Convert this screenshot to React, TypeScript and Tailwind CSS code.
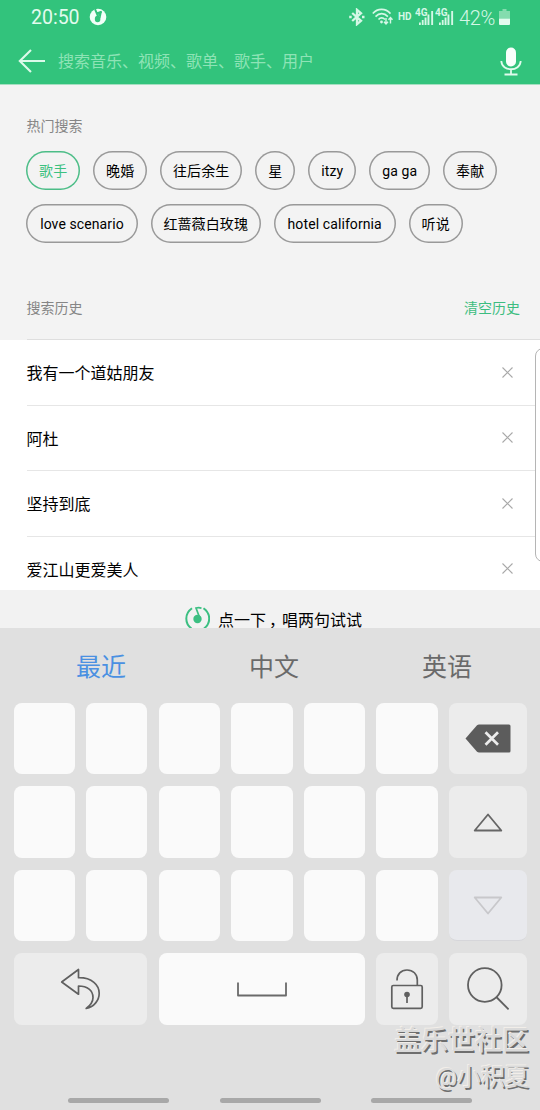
import type { ReactNode } from 'react';

const hotRows = [
  [
    { label: '歌手', width: 'w-[54px]', active: true },
    { label: '晚婚', width: 'w-[54px]' },
    { label: '往后余生', width: 'w-[82px]' },
    { label: '星', width: 'w-10' },
    { label: 'itzy', width: 'w-12' },
    { label: 'ga ga', width: 'w-[61px]' },
    { label: '奉献', width: 'w-[54px]' },
  ],
  [
    { label: 'love scenario', width: 'w-[111.500px]' },
    { label: '红蔷薇白玫瑰', width: 'w-[110px]' },
    { label: 'hotel california', width: 'w-[122px]' },
    { label: '听说', width: 'w-[54px]' },
  ],
];

const history = ['我有一个道姑朋友', '阿杜', '坚持到底', '爱江山更爱美人'];

function StatusBar() {
  return (
    <div className="flex h-8 items-center pl-[31px] pr-[30px] pt-0.5">
      <span className="mt-0.5 text-[19.5px] leading-none text-[#e2fbee]">20:50</span>
      <svg className="ml-[9px]" width="18" height="18" viewBox="0 0 18 18">
        <circle cx="9" cy="9" r="8.3" fill="#f1fff8" />
        <path d="M6 1.200 9.600 9.500M8.400 5.200l4.200-1.600" stroke="#32c37c" strokeWidth="2" fill="none" />
        <ellipse cx="8.600" cy="11" rx="2.800" ry="3.300" fill="#32c37c" />
        <path d="M8.200 4.800 13 3.200 11.400 10.500Z" fill="#32c37c" />
      </svg>
      <div className="ml-auto flex items-center text-[#d5f7e6]">
        <svg width="16" height="18" viewBox="0 0 16 18" fill="none" stroke="currentColor" strokeWidth="2.300">
          <path d="M3.200 5l8.800 7.800-4 3.400V1.800L12 5.200l-8.800 7.800" />
          <path d="M.2 9h2.500M13 9h2.500" />
        </svg>
        <svg className="ml-[7px]" width="23" height="18" viewBox="0 0 23 18" fill="none" stroke="currentColor" strokeWidth="1.6">
          <path d="M.8 5.600C5.500 0 13.500 0 18.500 5.600M3.500 8.600c3.600-4 8.800-4 12.400 0M6.500 11.400c1.800-2.100 4.600-2.100 6.400 0" />
          <circle cx="9.500" cy="14" r="1.4" fill="currentColor" stroke="none" />
          <path d="M14 10v6M12 13.800l2 2.200 2-2.200M18.500 15.500v-6M16.500 11.700l2-2.200 2 2.200" strokeWidth="1.4" />
        </svg>
        <span className="ml-[3px] w-4 pb-px text-[10px] font-bold leading-none">HD</span>
        <Signal />
        <Signal />
        <span className="ml-[5px] mt-0.5 w-[36px] text-[20px] font-light leading-none tracking-[-0.3px]">42%</span>
        <svg className="ml-[4px]" width="11" height="17" viewBox="0 0 11 17">
          <path d="M3.500 0h4v2H11v7.500H0V2h3.500z" fill="#84dcae" />
          <path d="M0 9.500h11V15a1 1 0 0 1-1 1H1a1 1 0 0 1-1-1z" fill="#e2fbee" />
        </svg>
      </div>
    </div>
  );
}

function Signal() {
  return (
    <svg className="ml-[1px]" width="19" height="18" viewBox="0 0 19 18" fill="currentColor">
      <text x="0" y="8" fontSize="10" fontWeight="700">4G</text>
      <path d="M4 14.500h1.800V17H4zM6.800 12h1.800v5H6.800zM9.600 9.500h1.900V17H9.600zM12.500 6.500h1.900V17h-1.900zM16.200 3h1.900v14h-1.900z" />
    </svg>
  );
}

function SearchBar() {
  return (
    <div className="flex h-[52px] items-center pl-[18px] pr-[18px] pt-[5px]">
      <svg width="27" height="24" viewBox="0 0 27 24" fill="none" stroke="#dcfaea" strokeWidth="2.100">
        <path d="M13 1 1.800 12 13 23M1.800 12H27" />
      </svg>
      <span className="ml-[13px] mt-0.5 text-base leading-none text-[#8ee3b6]">搜索音乐、视频、歌单、歌手、用户</span>
      <svg className="ml-auto mt-px" width="22" height="29" viewBox="0 0 22 29" fill="none" stroke="#e0fbed" strokeWidth="1.800">
        <rect x="6" y=".5" width="10" height="19" rx="5" fill="#f7fffb" stroke="none" />
        <path d="M1.300 14c.5 11 18.900 11 19.400 0M11 22.500V27M4.500 27.500h13" />
      </svg>
    </div>
  );
}

function Key({ children, className = 'bg-[#fafafa]' }: { children?: ReactNode; className?: string }) {
  return <div className={`flex items-center justify-center rounded-lg ${className}`}>{children}</div>;
}

function BlankKeys() {
  return (
    <>
      {Array.from({ length: 6 }, (_, i) => (
        <Key key={i} />
      ))}
    </>
  );
}

function Keyboard() {
  return (
    <div className="relative h-[482px] bg-[#e0e0e0]">
      <div className="flex h-[74.700px] pl-[14.500px] text-[25px] leading-[79px] text-[#6a6a6a]">
        <span className="w-[173px] text-center text-[#4a90e2]">最近</span>
        <span className="w-[173px] text-center">中文</span>
        <span className="w-[173px] text-center">英语</span>
      </div>
      <div className="mx-[13.500px] grid grid-cols-[repeat(6,61.400px)_78px] grid-rows-[repeat(4,71.800px)] gap-x-[11.200px] gap-y-[11.700px]">
        <BlankKeys />
        <Key className="bg-[#ececec]">
          <svg width="46" height="29" viewBox="0 0 46 29">
            <path d="M.5 14.500 12 1.300Q13 .5 14 .5h30q1.500 0 1.500 1.500v25q0 1.500-1.500 1.500H14q-1 0-2-.8z" fill="#5c5c5c" />
            <path d="m20.500 8.300 12.500 12.500m0-12.500L20.500 20.800" stroke="#ececec" strokeWidth="2.700" />
          </svg>
        </Key>
        <BlankKeys />
        <Key className="bg-[#ececec]">
          <svg width="30" height="19" viewBox="0 0 30 19" fill="none" stroke="#666" strokeWidth="1.800" strokeLinejoin="round">
            <path d="M15 1.500 28.300 17.500H1.700z" />
          </svg>
        </Key>
        <BlankKeys />
        <Key className="border-b border-[#d6d6da] bg-[#e8e9ed]">
          <svg width="30" height="19" viewBox="0 0 30 19" fill="none" stroke="#c8c8cb" strokeWidth="1.800" strokeLinejoin="round">
            <path d="M15 17.500 28.300 1.500H1.700z" />
          </svg>
        </Key>
        <Key className="col-span-2 bg-[#ececec]">
          <svg className="ml-0.5" width="42" height="42" viewBox="0 0 42 42" fill="none" stroke="#606060" strokeWidth="1.700" strokeLinejoin="round">
            <path d="M1.700 14 18.500 1.500v8.200C32 9.500 39.200 17 39.200 25.300c0 7-5 13.500-13 15.200 4-3 6.800-6.500 6.800-11C33 22.500 27.500 18 18.500 18v8.200z" />
          </svg>
        </Key>
        <Key className="col-span-3 bg-[#fafafa]">
          <svg width="50" height="15" viewBox="0 0 50 15" fill="none" stroke="#6a6a6a" strokeWidth="1.800" strokeLinejoin="round">
            <path d="M1 .5V13.500h48V.5" />
          </svg>
        </Key>
        <Key className="bg-[#ececec]">
          <svg width="34" height="42" viewBox="0 0 34 42" fill="none" stroke="#606060" strokeWidth="1.700">
            <rect x="1.800" y="17.500" width="30.400" height="22.800" rx="1.500" />
            <path d="M7 12.500C7 6 11 2 17 2s10.300 4 10.300 10v5.500M17 27v8" />
            <circle cx="17" cy="26.500" r="2.800" fill="#606060" stroke="none" />
          </svg>
        </Key>
        <Key className="bg-[#ececec]">
          <svg width="42" height="44" viewBox="0 0 42 44" fill="none" stroke="#606060" strokeWidth="1.800">
            <circle cx="17.800" cy="18" r="16.800" />
            <path d="m29.300 30 12.300 12.300" />
          </svg>
        </Key>
      </div>

      {/* gesture hints */}
      <div className="absolute bottom-[7.500px] left-[68px] flex gap-[50.500px]">
        <span className="h-[4.500px] w-[101px] rounded-full bg-[#a8a8a8]" />
        <span className="h-[4.500px] w-[101px] rounded-full bg-[#a8a8a8]" />
        <span className="h-[4.500px] w-[101px] rounded-full bg-[#a8a8a8]" />
      </div>

      <div className="absolute bottom-[15px] right-[11px] text-right text-[#dadada] [text-shadow:-1px_-1px_0_#f2eee9,1.500px_1.500px_0_#6e6e6e]">
        <p className="text-[27px] font-medium leading-9">盖乐世社区</p>
        <p className="text-2xl leading-9">@小积夏</p>
      </div>
    </div>
  );
}

export default function App() {
  return (
    <div className="relative flex h-[1110px] w-[540px] flex-col overflow-hidden bg-white font-['Roboto','Noto_Sans_CJK_SC',sans-serif] text-black">
      <header className="h-[84px] bg-[#32c37c]">
        <StatusBar />
        <SearchBar />
      </header>

      <section className="h-[256px] border-t border-[#a5dfc1] bg-[#f3f3f3] pl-[26.500px]">
        <h2 className="pt-[31px] text-sm leading-5 text-[#868686]">热门搜索</h2>
        <div className="-ml-[0.3px] mt-[15px] flex flex-col gap-3.5">
          {hotRows.map((row, i) => (
            <div key={i} className="flex gap-[13px]">
              {row.map((tag) => (
                <span
                  key={tag.label}
                  className={`flex h-[39px] shrink-0 items-center justify-center whitespace-nowrap rounded-[20px] pt-px text-sm tracking-[0.1px] inset-ring-[1.5px] ${tag.width} ${
                    tag.active ? 'inset-ring-[#4cbd87] text-[#3cc180]' : 'inset-ring-[#999]'
                  }`}
                >
                  {tag.label}
                </span>
              ))}
            </div>
          ))}
        </div>
        <div className="mt-[55px] flex h-[42px] justify-between border-b border-[#dedede] pr-5 text-sm leading-5 text-[#868686]">
          <span>搜索历史</span>
          <span className="text-[#3cbd80]">清空历史</span>
        </div>
      </section>

      <ul className="h-[250px] overflow-hidden pl-[26.500px]">
        {history.map((item) => (
          <li key={item} className="flex h-[65.500px] items-center justify-between border-b border-[#e6e6e6] pr-[27.500px] text-base">
            <span className="pt-1">{item}</span>
            <svg width="11" height="11" viewBox="0 0 11 11" stroke="#a8a8a8" strokeWidth="1.100">
              <path d="m.5.5 10 10m0-10-10 10" />
            </svg>
          </li>
        ))}
      </ul>

      <div className="flex h-[38px] items-start bg-[#f2f2f2] pl-[185px] pt-4">
        <svg width="25" height="25" viewBox="0 0 25 25" fill="none" stroke="#3cbf82" strokeWidth="2">
          <path d="M7 2.300C-.5 7.500-.5 17.500 6.500 22.500M18.500 2.300C26 7.500 26 17.500 19 22.500" />
          <circle cx="12.500" cy="13" r="4.200" fill="#3cbf82" stroke="none" />
          <path d="M15 12.500 11 2q3-.8 5.500.2" strokeWidth="1.700" />
        </svg>
        <span className="ml-2 mt-[5px] text-base leading-5">
          点一下<span className="pl-[3px] tracking-[-3px]">，</span>唱两句试试
        </span>
      </div>

      <Keyboard />

      {/* edge panel handle */}
      <div className="absolute -right-2 top-[348px] h-[214px] w-[13.500px] rounded-l-lg border border-[#b5b5b5] bg-white" />
    </div>
  );
}
